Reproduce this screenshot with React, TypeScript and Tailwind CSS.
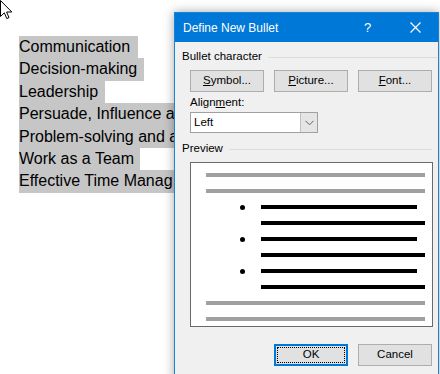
import React from "react";

const lines: { t: string; w: number }[] = [
  { t: "Communication", w: 119 },
  { t: "Decision-making", w: 125 },
  { t: "Leadership", w: 86 },
  { t: "Persuade, Influence a", w: 160 },
  { t: "Problem-solving and a", w: 160 },
  { t: "Work as a Team", w: 121 },
  { t: "Effective Time Manag", w: 160 },
];

function Btn({ children, focus }: { children: React.ReactNode; focus?: boolean }) {
  return (
    <div
      className={
        focus
          ? "w-[74px] h-[22px] flex items-center justify-center bg-[#e1e1e1] border-2 border-[#0078d7] outline-1 outline-dotted outline-black outline-offset-[-4px]"
          : "w-[74px] h-[22px] flex items-center justify-center bg-[#e1e1e1] border border-[#adadad]"
      }
    >
      {children}
    </div>
  );
}

function Gray() {
  return <div className="h-[4px] w-[219px] bg-[#a0a0a0]" />;
}

function BulletRow() {
  return (
    <>
      <div className="h-[4px] flex items-center">
        <div className="ml-[34px] w-[5px] h-[5px] rounded-full bg-black" />
        <div className="ml-[16px] w-[156px] h-[4px] bg-black" />
      </div>
      <div className="h-[4px] flex items-center">
        <div className="ml-[55px] w-[164px] h-[4px] bg-black" />
      </div>
    </>
  );
}

export default function App() {
  return (
    <div
      className="relative w-[440px] h-[374px] bg-white overflow-hidden"
      style={{ fontFamily: '"Liberation Sans", Arial, sans-serif' }}
    >
      <div className="pt-[36px] pl-[19px] text-[16px] leading-[22.4px] text-black">
        {lines.map((l) => (
          <div key={l.t} className="bg-[#c6c6c6] whitespace-nowrap" style={{ width: l.w }}>
            {l.t}
          </div>
        ))}
      </div>

      <svg className="absolute left-0 top-0" width="14" height="20" viewBox="0 0 14 20">
        <path d="M0.5 0.5 L0.5 16.5 L4.3 12.8 L6.8 18.6 L9 17.6 L6.6 12 L11.8 12 Z" fill="white" stroke="black" strokeWidth="1" strokeLinejoin="miter" />
      </svg>

      <div className="absolute left-[174px] top-[12px] w-[265px] h-[370px] bg-[#f0f0f0] border border-[#1883d7] shadow-[0_0_10px_rgba(0,0,0,0.35)] text-[11.5px] text-black">
        <div className="h-[29px] bg-[#0078d7] flex items-center text-white text-[12px] pl-[8px]">
          <span className="flex-1">Define New Bullet</span>
          <span className="w-[10px] text-[13px] mr-[36px]">?</span>
          <svg width="11" height="11" viewBox="0 0 11 11" className="mr-[17px]">
            <path d="M0.5 0.5 L10.5 10.5 M10.5 0.5 L0.5 10.5" stroke="white" strokeWidth="1.2" />
          </svg>
        </div>

        <div className="pl-[7px] pr-[6px]">
          <div className="mt-[7px] h-[16px] flex items-center gap-[6px]">
            <span>Bullet character</span>
            <div className="flex-1 h-px bg-[#dcdcdc] mr-[-5px]" />
          </div>

          <div className="mt-[5px] ml-[8px] flex gap-[10px]">
            <Btn><span><u>S</u>ymbol...</span></Btn>
            <Btn><span><u>P</u>icture...</span></Btn>
            <Btn><span><u>F</u>ont...</span></Btn>
          </div>

          <div className="mt-[3px] ml-[8px] h-[16px] flex items-center">
            <span>Align<u>m</u>ent:</span>
          </div>

          <div className="mt-[1px] ml-[8px] w-[128px] h-[21px] flex bg-white border border-[#a0a0a0]">
            <div className="flex-1 flex items-center pl-[3px]">Left</div>
            <div className="w-[17px] h-full bg-[#e5e5e5] border-l border-[#c0c0c0] flex items-center justify-center">
              <svg width="9" height="6" viewBox="0 0 9 6">
                <path d="M0.5 0.8 L4.5 4.8 L8.5 0.8" fill="none" stroke="#606060" strokeWidth="1" />
              </svg>
            </div>
          </div>

          <div className="mt-[8px] h-[16px] flex items-center gap-[6px]">
            <span>Preview</span>
            <div className="flex-1 h-px bg-[#dcdcdc]" />
          </div>

          <div className="mt-[5px] ml-[8px] w-[243px] h-[165px] bg-white border border-[#696969]">
            <div className="pt-[10px] pl-[15px] flex flex-col gap-[12px]">
              <Gray />
              <Gray />
              <BulletRow />
              <BulletRow />
              <BulletRow />
              <Gray />
              <Gray />
            </div>
          </div>

          <div className="mt-[17px] ml-[92px] flex gap-[10px]">
            <Btn focus>OK</Btn>
            <Btn>Cancel</Btn>
          </div>
        </div>
      </div>
    </div>
  );
}
